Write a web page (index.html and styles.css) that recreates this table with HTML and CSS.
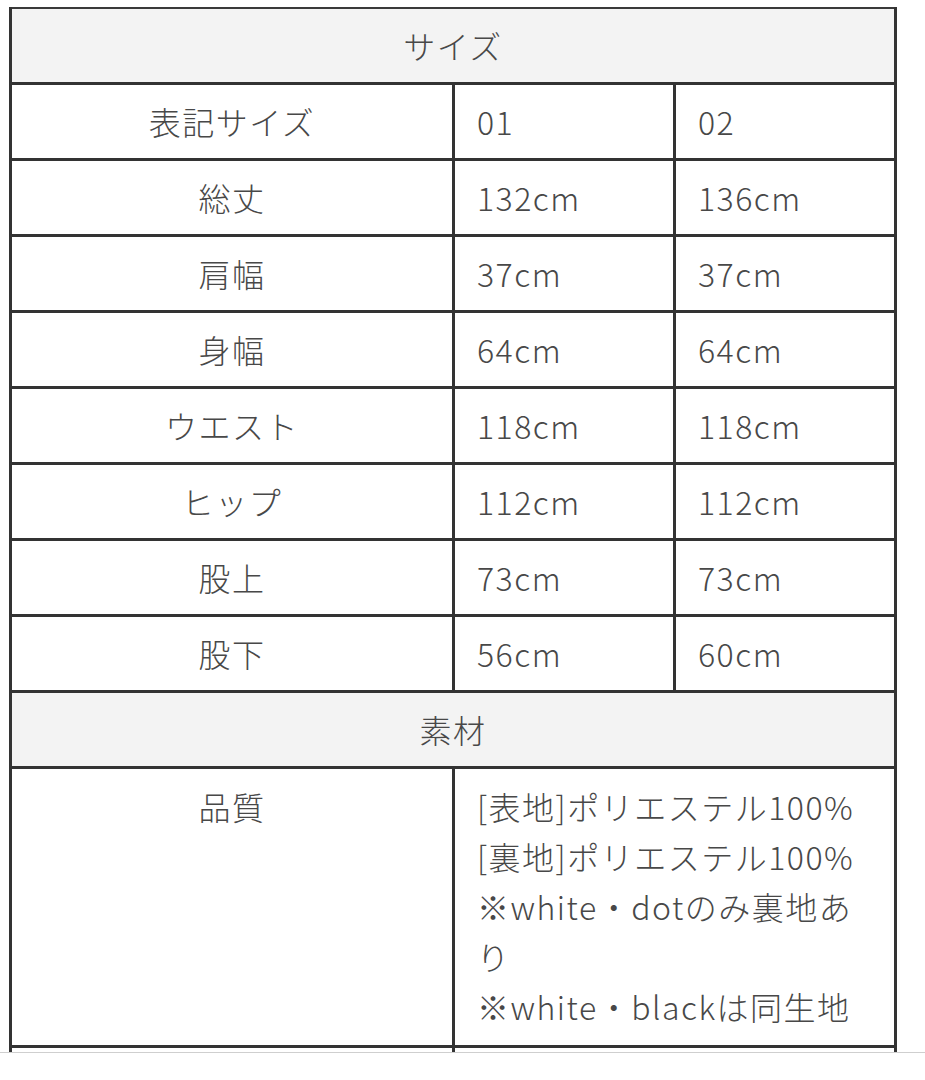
FILE: index.html
```html
<!DOCTYPE html>
<html lang="ja">
<head>
<meta charset="utf-8">
<title>サイズ</title>
<link rel="stylesheet" href="styles.css">
</head>
<body>
<div class="page">
  <table class="spec">
    <colgroup>
      <col class="c-label">
      <col class="c-val">
      <col class="c-val">
    </colgroup>
    <tbody>
      <tr><th class="head first" colspan="3">サイズ</th></tr>
      <tr><td class="label">表記サイズ</td><td class="val">01</td><td class="val">02</td></tr>
      <tr><td class="label">総丈</td><td class="val">132cm</td><td class="val">136cm</td></tr>
      <tr><td class="label">肩幅</td><td class="val">37cm</td><td class="val">37cm</td></tr>
      <tr><td class="label">身幅</td><td class="val">64cm</td><td class="val">64cm</td></tr>
      <tr><td class="label">ウエスト</td><td class="val">118cm</td><td class="val">118cm</td></tr>
      <tr><td class="label">ヒップ</td><td class="val">112cm</td><td class="val">112cm</td></tr>
      <tr><td class="label">股上</td><td class="val">73cm</td><td class="val">73cm</td></tr>
      <tr><td class="label">股下</td><td class="val">56cm</td><td class="val">60cm</td></tr>
      <tr><th class="head" colspan="3">素材</th></tr>
      <tr>
        <td class="label top">品質</td>
        <td class="val top wide" colspan="2">[表地]ポリエステル100%<br>[裏地]ポリエステル100%<br>※white・dotのみ裏地あり<br>※white・blackは同生地</td>
      </tr>
      <tr><td class="label">&nbsp;</td><td class="val" colspan="2">&nbsp;</td></tr>
    </tbody>
  </table>
</div>
</body>
</html>
```

FILE: styles.css
```css
html, body {
  margin: 0;
  padding: 0;
  background: #ffffff;
}

.page {
  height: 1053px;
  overflow: hidden;
  border-bottom: 1px solid #cfcfcf;
  padding: 7px 0 0 9px;
  box-sizing: border-box;
}

.spec {
  width: 887px;
  border-collapse: collapse;
  table-layout: fixed;
  font-family: "Noto Sans CJK JP", "Noto Sans", sans-serif;
  font-weight: 300;
  font-size: 32px;
  letter-spacing: 1.5px;
  line-height: 50px;
  color: #484848;
}

.c-label { width: 443px; }
.c-val { width: 221px; }

.spec th,
.spec td {
  border: 3px solid #333333;
  padding: 11px 22px 12px;
  vertical-align: middle;
}

.spec .head {
  background: #f3f3f3;
  font-weight: 300;
  text-align: center;
  padding: 11px 22px 12px;
}

.spec .head.first {
  border-top: 2px solid #3a3a3a;
}

.spec .label {
  text-align: center;
}

.spec .val {
  text-align: left;
}

.spec .wide {
  padding-right: 30px;
}

.spec .top {
  vertical-align: top;
  padding-top: 12px;
  padding-bottom: 14px;
}
```
